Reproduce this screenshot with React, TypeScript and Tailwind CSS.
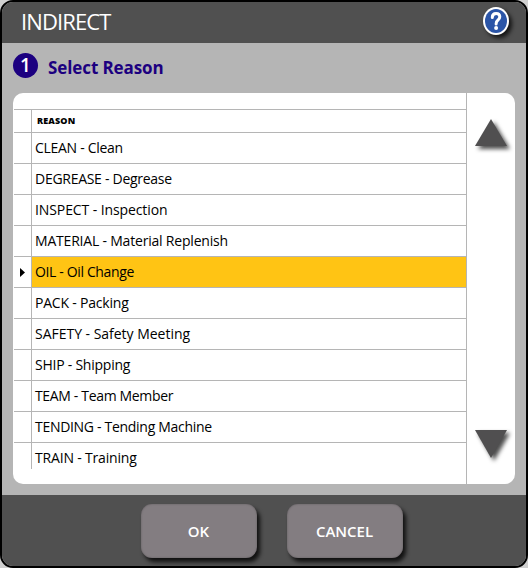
const rows = [
  { label: 'CLEAN - Clean', spacing: 'tracking-[-0.29px]' },
  { label: 'DEGREASE - Degrease', spacing: 'tracking-[-0.28px]' },
  { label: 'INSPECT - Inspection', spacing: 'tracking-[-0.1px]' },
  { label: 'MATERIAL - Material Replenish', spacing: 'tracking-[-0.2px]' },
  { label: 'OIL - Oil Change', spacing: 'tracking-[-0.36px]', selected: true },
  { label: 'PACK - Packing', spacing: 'tracking-[-0.2px]' },
  { label: 'SAFETY - Safety Meeting', spacing: 'tracking-[-0.02px]' },
  { label: 'SHIP - Shipping', spacing: 'tracking-[-0.24px]' },
  { label: 'TEAM - Team Member', spacing: 'tracking-[-0.34px]' },
  { label: 'TENDING - Tending Machine', spacing: 'tracking-[-0.3px]' },
  { label: 'TRAIN - Training', spacing: 'tracking-[-0.18px]' },
];

function Arrow({ down = false }: { down?: boolean }) {
  return (
    <svg width="48" height="44" viewBox="0 0 48 44" className="block drop-shadow-[3px_3px_2px_rgba(0,0,0,0.7)]">
      <path d={down ? 'M8 5H40L24 33Z' : 'M24 4L40 31H8Z'} fill="#504f50" />
    </svg>
  );
}

function HelpIcon() {
  return (
    <svg width="32" height="34" viewBox="0 0 32 34" className="mb-0.5 drop-shadow-[3px_3px_2px_rgba(0,0,0,0.75)]">
      <ellipse cx="15" cy="16" rx="13" ry="14" fill="#fff" />
      <ellipse cx="15" cy="16" rx="11" ry="12" fill="#2b55a7" />
      <path d="M11.3 12.4Q11.3 8.4 15.1 8.4Q18.8 8.4 18.8 11.7Q18.8 13.6 17 15Q15.1 16.4 15.1 19" fill="none" stroke="#fff" strokeWidth="3" strokeLinecap="round" />
      <circle cx="15.1" cy="23" r="2" fill="#fff" />
    </svg>
  );
}

function ActionButton({ children }: { children: string }) {
  return (
    <button className="flex h-[54px] w-[116px] items-center justify-center rounded-[11px] bg-[#837d81] text-[15px] leading-5 font-semibold text-white shadow-[inset_0_0_2px_#5b575a,3px_4px_4px_rgba(0,0,0,0.8)]">
      {children}
    </button>
  );
}

export default function App() {
  return (
    <div className="h-[568px] w-[528px] bg-[#d0d0d0] font-['Open_Sans','Noto_Sans',sans-serif]">
      <div className="flex h-full flex-col overflow-hidden rounded-[13px] border-2 border-black bg-[#b5b5b5]">
        <header className="flex h-[41px] shrink-0 items-center justify-between bg-[#505050] pr-[13px] pl-[19px] text-white">
          <h1 className="mb-[3px] text-[22px] leading-7 tracking-[-0.9px]">INDIRECT</h1>
          <HelpIcon />
        </header>

        <main className="flex h-[452px] shrink-0 flex-col px-[11px]">
          <div className="flex h-[50px] items-center gap-[10px] text-[#1c0080]">
            <span className="mb-[5px] flex size-[25px] items-center justify-center rounded-full bg-[#1c0080] text-[19px] leading-none font-semibold text-white">1</span>
            <h2 className="text-[17px] leading-6 font-bold tracking-[-0.1px]">Select Reason</h2>
          </div>

          <section className="flex h-[391px] w-[502px] overflow-hidden rounded-[10px] bg-white">
            <div className="w-[453px] pt-4 pl-px">
              <div className="h-[360px] overflow-hidden border-t border-[#b5b5b5]">
                <div className="flex h-[23px] border-b border-[#b5b5b5]">
                  <div className="w-[18px] border-r border-[#b5b5b5]" />
                  <div className="pl-[5px] text-[9px] leading-[22px] font-extrabold tracking-[0.15px] text-black">REASON</div>
                </div>
                {rows.map((row) => (
                  <div key={row.label} className="flex h-[31px] border-b border-[#b5b5b5]">
                    <div className="flex w-[18px] items-center border-r border-[#b5b5b5] pl-[6px]">
                      {row.selected && (
                        <svg width="5" height="9" viewBox="0 0 5 9"><path d="M0 0L5 4.5L0 9Z" /></svg>
                      )}
                    </div>
                    <div className={`flex-1 pl-[3px] text-[14px] leading-[30px] whitespace-nowrap text-black ${row.spacing} ${row.selected ? 'bg-[#ffc414]' : ''}`}>
                      {row.label}
                    </div>
                  </div>
                ))}
              </div>
            </div>
            <div className="flex flex-1 flex-col items-center justify-between border-l border-[#b5b5b5] pt-[22px] pb-[15px]">
              <Arrow />
              <Arrow down />
            </div>
          </section>
        </main>

        <footer className="flex flex-1 justify-center gap-[30px] bg-[#505050] pt-[9px] pl-[15px]">
          <ActionButton>OK</ActionButton>
          <ActionButton>CANCEL</ActionButton>
        </footer>
      </div>
    </div>
  );
}
